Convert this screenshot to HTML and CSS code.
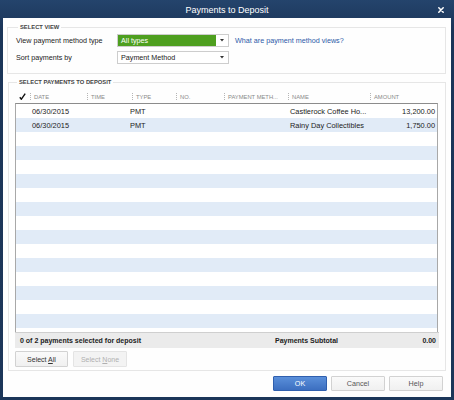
FILE: index.html
```html
<!DOCTYPE html>
<html>
<head>
<meta charset="utf-8">
<link rel="stylesheet" href="styles.css">
</head>
<body>
<div class="window">
  <div class="titlebar">
    <span></span>
    <span class="title">Payments to Deposit</span>
    <span class="close-wrap"><svg class="close" width="6" height="6" viewBox="0 0 6 6"><path d="M0.8 0.8L5.2 5.2M5.2 0.8L0.8 5.2" stroke="#fff" stroke-width="1.5" stroke-linecap="round"/></svg></span>
  </div>
  <div class="content">
    <fieldset class="group group-view">
      <legend>SELECT VIEW</legend>
      <div class="view-grid">
        <span class="lbl">View payment method type</span>
        <div class="dropdown green"><span class="dd-text">All types</span><span class="dd-arrow"><svg width="4" height="3" viewBox="0 0 4 3"><path d="M0 0H4L2 2.5Z" fill="#333"/></svg></span></div>
        <a class="link">What are payment method views?</a>
        <span class="lbl">Sort payments by</span>
        <div class="dropdown"><span class="dd-text">Payment Method</span><span class="dd-arrow"><svg width="4" height="3" viewBox="0 0 4 3"><path d="M0 0H4L2 2.5Z" fill="#333"/></svg></span></div>
        <span></span>
      </div>
    </fieldset>

    <fieldset class="group group-pay">
      <legend>SELECT PAYMENTS TO DEPOSIT</legend>
      <div class="thead cols">
        <span class="hc check"><svg width="7" height="7" viewBox="0 0 7 7"><path d="M0.8 4.2L2.4 6.2L6.2 0.6" fill="none" stroke="#111" stroke-width="1.4" stroke-linejoin="round"/></svg></span>
        <span class="hc"><i class="sep"></i>DATE</span>
        <span class="hc"><i class="sep"></i>TIME</span>
        <span class="hc"><i class="sep"></i>TYPE</span>
        <span class="hc"><i class="sep"></i>NO.</span>
        <span class="hc"><i class="sep"></i>PAYMENT METH...</span>
        <span class="hc"><i class="sep"></i>NAME</span>
        <span class="hc"><i class="sep"></i>AMOUNT</span>
      </div>
      <div class="tbody">
        <div class="row cols"><span></span><span>06/30/2015</span><span></span><span class="type">PMT</span><span></span><span></span><span>Castlerock Coffee Ho...</span><span class="amt">13,200.00</span></div>
        <div class="row cols alt"><span></span><span>06/30/2015</span><span></span><span class="type">PMT</span><span></span><span></span><span>Rainy Day Collectibles</span><span class="amt">1,750.00</span></div>
        <div class="row"></div>
        <div class="row alt"></div>
        <div class="row"></div>
        <div class="row alt"></div>
        <div class="row"></div>
        <div class="row alt"></div>
        <div class="row"></div>
        <div class="row alt"></div>
        <div class="row"></div>
        <div class="row alt"></div>
        <div class="row"></div>
        <div class="row alt"></div>
        <div class="row"></div>
        <div class="row alt"></div>
        <div class="row"></div>
      </div>
      <div class="tfoot">
        <span class="sel-count">0 of 2 payments selected for deposit</span>
        <span class="subtotal-lbl">Payments Subtotal</span>
        <span class="subtotal">0.00</span>
      </div>
      <div class="sel-buttons">
        <button class="btn">Select <u>A</u>ll</button>
        <button class="btn disabled">Select <u>N</u>one</button>
      </div>
    </fieldset>

    <div class="actions">
      <button class="btn big primary">OK</button>
      <button class="btn big">Cancel</button>
      <button class="btn big">Help</button>
    </div>
  </div>
</div>
</body>
</html>
```

FILE: styles.css
```css
* { box-sizing: border-box; }
html, body { margin: 0; padding: 0; }
body {
  width: 454px;
  height: 400px;
  background: #1c3659;
  font-family: "Liberation Sans", Arial, sans-serif;
  overflow: hidden;
}
.window {
  width: 454px;
  height: 400px;
  display: flex;
  flex-direction: column;
  background: linear-gradient(#24446c, #1b3558 30px, #1c3659);
}
.titlebar {
  height: 18px;
  display: grid;
  grid-template-columns: 1fr auto 1fr;
  align-items: center;
  color: #fff;
  font-size: 9px;
  padding-top: 1px;
}
.close-wrap { justify-self: end; display: flex; padding-right: 10px; }
.content {
  flex: 1;
  margin: 0 3px 3px 3px;
  background: #fefefe;
  display: flex;
  flex-direction: column;
}
.group {
  border: 1px solid #e6e6e6;
  margin: 0;
  padding: 0;
  min-width: 0;
}
.group legend {
  font-size: 5.8px;
  font-weight: bold;
  color: #444;
  line-height: 7px;
  padding: 0 2px;
  margin-left: 2px;
}
.group-view {
  margin: 6px 5px 0 4px;
  padding: 3px 0 9px 8px;
}
.view-grid {
  display: grid;
  grid-template-columns: 101px 112px auto;
  grid-auto-rows: 13px;
  row-gap: 4px;
  align-items: center;
}
.lbl { font-size: 7.2px; color: #222; }
.dropdown {
  height: 13px;
  display: flex;
  border: 1px solid #cdcdcd;
  background: #fff;
  font-size: 7.2px;
  color: #222;
}
.dd-text { flex: 1; display: flex; align-items: center; padding-left: 3px; }
.dropdown.green .dd-text { background: #4e9f1f; color: #fff; }
.dd-arrow { width: 12px; display: flex; align-items: center; justify-content: center; background: #fff; }
.link { font-size: 7.2px; color: #2c5aa8; margin-left: 6px; white-space: nowrap; align-self: start; margin-top: 2px; }

.group-pay {
  margin: 5px 5px 0 5px;
  padding: 2px 0 3px 6px;
  height: 292px;
}
.cols {
  display: grid;
  grid-template-columns: 14px 57px 45px 44px 48px 64px 82px 67px;
}
.thead {
  height: 13px;
  align-items: center;
  padding-left: 1px;
  margin-top: 2px;
}
.hc {
  font-size: 5.8px;
  color: #8a8a8a;
  display: flex;
  align-items: center;
  white-space: nowrap;
}
.hc.check { padding-left: 3px; }
.sep {
  display: inline-block;
  width: 0;
  height: 7px;
  border-left: 1px dotted #b5b5b5;
  margin-right: 3px;
}
.tbody {
  width: 423px;
  height: 229px;
  border: 1px solid #a8a8a8;
  border-top-color: #8c8c8c;
  border-bottom: none;
  overflow: hidden;
  background: #fff;
}
.row {
  height: 14px;
  background: #fff;
  font-size: 7.4px;
  color: #222;
  align-items: center;
}
.row.alt { background: #e1ebf7; }
.row span { white-space: nowrap; overflow: hidden; }
.row .type { margin-left: -2px; }
.row .amt { text-align: right; padding-right: 2px; }
.row span:nth-child(2) { padding-left: 2px; }
.row span:nth-child(7) { padding-left: 2px; }
.tfoot {
  width: 424px;
  height: 16px;
  background: #ebebeb;
  border-top: 1px solid #cfcfcf;
  display: grid;
  grid-template-columns: 1fr 121px 40px;
  align-items: center;
  font-size: 7px;
  font-weight: bold;
  color: #222;
  padding: 0 3px 0 5px;
}
.subtotal { text-align: right; }
.sel-buttons {
  display: flex;
  gap: 5px;
  margin-top: 3px;
}
.btn {
  font-family: "Liberation Sans", Arial, sans-serif;
  font-size: 7px;
  color: #333;
  background: linear-gradient(#fafafa, #f0f0f0);
  border: 1px solid #d2d2d2;
  border-radius: 1px;
  height: 16px;
  width: 53px;
  padding: 0;
  margin: 0;
}
.btn.disabled { color: #b0b0b0; background: #f3f3f3; border-color: #e4e4e4; width: 54px; }
.actions {
  display: flex;
  justify-content: flex-end;
  gap: 4px;
  margin-top: 5px;
  padding-right: 8px;
}
.btn.big {
  width: 54px;
  height: 15px;
  color: #555;
  font-size: 7.2px;
}
.btn.primary {
  background: linear-gradient(#5a8fda, #3c6fc0);
  border-color: #2f5fae;
  color: #fff;
}
```
